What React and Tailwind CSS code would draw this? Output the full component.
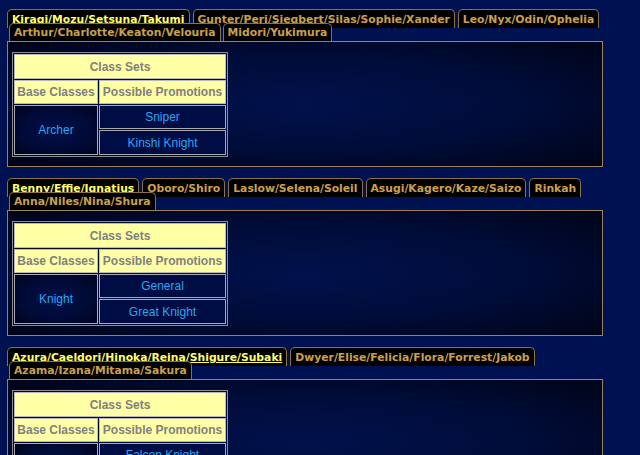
import clsx from "clsx";

const sections = [
  {
    rows: [
      ["Kiragi/Mozu/Setsuna/Takumi", "Gunter/Peri/Siegbert/Silas/Sophie/Xander", "Leo/Nyx/Odin/Ophelia"],
      ["Arthur/Charlotte/Keaton/Velouria", "Midori/Yukimura"],
    ],
    base: "Archer",
    promos: ["Sniper", "Kinshi Knight"],
  },
  {
    rows: [
      ["Benny/Effie/Ignatius", "Oboro/Shiro", "Laslow/Selena/Soleil", "Asugi/Kagero/Kaze/Saizo", "Rinkah"],
      ["Anna/Niles/Nina/Shura"],
    ],
    base: "Knight",
    promos: ["General", "Great Knight"],
  },
  {
    rows: [
      ["Azura/Caeldori/Hinoka/Reina/Shigure/Subaki", "Dwyer/Elise/Felicia/Flora/Forrest/Jakob"],
      ["Azama/Izana/Mitama/Sakura"],
    ],
    base: "Sky Knight",
    promos: ["Falcon Knight", "Kinshi Knight"],
  },
];

function Tab({ label, active, tall }) {
  return (
    <div
      className={clsx(
        "rounded-t-[5px] border border-b-0 border-[#8a7244] bg-black px-[4px] text-[10.8px] font-bold whitespace-nowrap",
        tall ? "h-[19px] pt-[3px] leading-[13px]" : "h-[18px] pt-[2px] leading-[13px]",
        active ? "text-[#ffff6a] underline underline-offset-[1px]" : "text-[#c9a04e]"
      )}
      style={{ fontFamily: '"DejaVu Sans", Verdana, sans-serif' }}
    >
      {label}
    </div>
  );
}

function ClassTable({ base, promos }) {
  return (
    <table
      className="border-separate border-spacing-[1px] border border-[#8c8c94] text-[12px]"
      style={{ fontFamily: '"Liberation Sans", Arial, sans-serif' }}
    >
      <tbody>
        <tr>
          <td colSpan={2} className="h-[25px] border border-[#b8b8b8] bg-[#ffffa6] p-0 text-center font-bold text-[#808080]">
            Class Sets
          </td>
        </tr>
        <tr>
          <td className="h-[24px] w-[84px] border border-[#b8b8b8] bg-[#ffffa6] p-0 text-center font-bold text-[#808080]">
            Base Classes
          </td>
          <td className="h-[24px] w-[127px] border border-[#b8b8b8] bg-[#ffffa6] p-0 text-center font-bold text-[#808080]">
            Possible Promotions
          </td>
        </tr>
        <tr>
          <td
            rowSpan={2}
            className="border border-[#a8a8b0] p-0 text-center text-[#28a6f4] bg-[radial-gradient(ellipse_at_center,#00104a_0%,#000a36_60%,#00041c_100%)]"
          >
            {base}
          </td>
          <td className="h-[24px] border border-[#a8a8b0] bg-[#000c44] p-0 text-center text-[#28a6f4]">{promos[0]}</td>
        </tr>
        <tr>
          <td className="h-[25px] border border-[#a8a8b0] bg-[#000c44] p-0 text-center text-[#28a6f4]">{promos[1]}</td>
        </tr>
      </tbody>
    </table>
  );
}

function Section({ rows, base, promos }) {
  return (
    <div className="mb-[11px]">
      <div className="flex gap-[3px]">
        {rows[0].map((t, i) => (
          <Tab key={t} label={t} active={i === 0} tall />
        ))}
      </div>
      <div className="relative -mt-[5px] flex gap-[2px] pl-[2px]">
        {rows[1].map((t) => (
          <Tab key={t} label={t} />
        ))}
      </div>
      <div className="w-[596px] border border-[#9c8258] bg-[radial-gradient(ellipse_at_center,#00114c_0%,#000c38_55%,#000418_100%)] pt-[10px] pb-[9px] pl-[4px]">
        <ClassTable base={base} promos={promos} />
      </div>
    </div>
  );
}

export default function App() {
  return (
    <div className="min-h-screen bg-[#001152] pt-[9px] pl-[7px]">
      {sections.map((s) => (
        <Section key={s.base} {...s} />
      ))}
    </div>
  );
}
